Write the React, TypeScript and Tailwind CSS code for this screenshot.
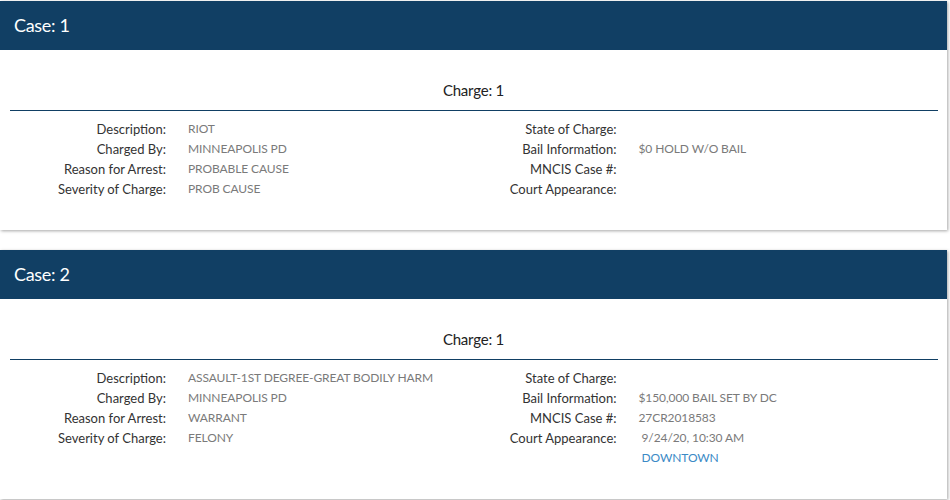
import React from "react"

type Field = { label: string; value?: string; extra?: string }

type CaseData = {
  caseNo: number
  charge: number
  left: Field[]
  right: Field[]
}

const cases: CaseData[] = [
  {
    caseNo: 1,
    charge: 1,
    left: [
      { label: "Description:", value: "RIOT" },
      { label: "Charged By:", value: "MINNEAPOLIS PD" },
      { label: "Reason for Arrest:", value: "PROBABLE CAUSE" },
      { label: "Severity of Charge:", value: "PROB CAUSE" },
    ],
    right: [
      { label: "State of Charge:" },
      { label: "Bail Information:", value: "$0 HOLD W/O BAIL" },
      { label: "MNCIS Case #:" },
      { label: "Court Appearance:" },
    ],
  },
  {
    caseNo: 2,
    charge: 1,
    left: [
      { label: "Description:", value: "ASSAULT-1ST DEGREE-GREAT BODILY HARM" },
      { label: "Charged By:", value: "MINNEAPOLIS PD" },
      { label: "Reason for Arrest:", value: "WARRANT" },
      { label: "Severity of Charge:", value: "FELONY" },
    ],
    right: [
      { label: "State of Charge:" },
      { label: "Bail Information:", value: "$150,000 BAIL SET BY DC" },
      { label: "MNCIS Case #:", value: "27CR2018583" },
      { label: "Court Appearance:", value: "9/24/20, 10:30 AM", extra: "DOWNTOWN" },
    ],
  },
]

function FieldRow({ field, labelWidth }: { field: Field; labelWidth: string }) {
  return (
    <div className="flex leading-[20px]">
      <div className={`${labelWidth} shrink-0 text-right text-[13px] text-[#333]`}>{field.label}</div>
      <div className="ml-[22px] text-[12px] tracking-[-0.1px] text-[#7a7a7a]">
        {field.extra ? (
          <div className="pl-[3px]">
            <div>{field.value}</div>
            <div className="text-[#3b8ac6]">{field.extra}</div>
          </div>
        ) : (
          <div>{field.value ?? "\u00a0"}</div>
        )}
      </div>
    </div>
  )
}

function CaseCard({ data }: { data: CaseData }) {
  return (
    <div className="w-[947px] bg-white shadow-[1px_1px_3px_rgba(0,0,0,0.35)]">
      <div className="h-[49px] bg-[#113f64] px-[14px] flex items-center">
        <span className="text-white text-[18px] tracking-[-0.3px]">Case: {data.caseNo}</span>
      </div>
      <div className="px-[10px] pb-[31px]">
        <div className="pt-[30px] pb-[10px] text-center text-[15px] tracking-[-0.2px] text-[#222] leading-[20px]">
          Charge: {data.charge}
        </div>
        <div className="h-px bg-[#113f64] mr-[-1px]" />
        <div className="grid grid-cols-2 pt-[8px]">
          <div>
            {data.left.map((f) => (
              <FieldRow key={f.label} field={f} labelWidth="w-[156px]" />
            ))}
          </div>
          <div>
            {data.right.map((f) => (
              <FieldRow key={f.label} field={f} labelWidth="w-[143px]" />
            ))}
          </div>
        </div>
      </div>
    </div>
  )
}

export default function App() {
  return (
    <div className="min-h-screen bg-white pt-px font-['Lato','Liberation_Sans',sans-serif]">
      <div className="flex flex-col gap-[20px]">
        {cases.map((c) => (
          <CaseCard key={c.caseNo} data={c} />
        ))}
      </div>
    </div>
  )
}
